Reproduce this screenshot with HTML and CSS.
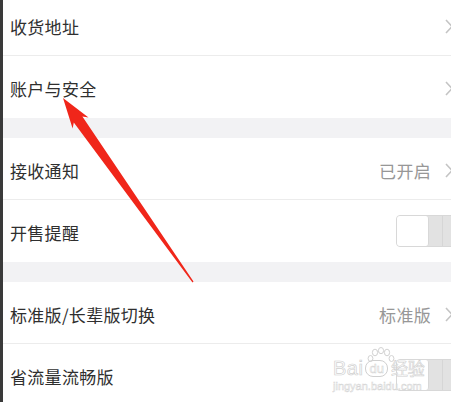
FILE: index.html
```html
<!DOCTYPE html>
<html lang="zh-CN">
<head>
<meta charset="utf-8">
<title>设置</title>
<link rel="stylesheet" href="styles.css">
</head>
<body>
<div class="screen">
  <div class="list">
    <div class="row first sep">
      <span class="label">收货地址</span>
      <span class="chev"><svg width="8" height="15" viewBox="0 0 8 15"><path d="M1 1 L7 7.5 L1 14" fill="none" stroke="#c4c4c4" stroke-width="1.6"/></svg></span>
    </div>
    <div class="row">
      <span class="label">账户与安全</span>
      <span class="chev"><svg width="8" height="15" viewBox="0 0 8 15"><path d="M1 1 L7 7.5 L1 14" fill="none" stroke="#c4c4c4" stroke-width="1.6"/></svg></span>
    </div>
    <div class="gap"></div>
    <div class="row sep">
      <span class="label">接收通知</span>
      <span class="value">已开启</span>
      <span class="chev"><svg width="8" height="15" viewBox="0 0 8 15"><path d="M1 1 L7 7.5 L1 14" fill="none" stroke="#c4c4c4" stroke-width="1.6"/></svg></span>
    </div>
    <div class="row">
      <span class="label">开售提醒</span>
      <span class="toggle"><span class="knob"></span><span class="track-line"></span></span>
    </div>
    <div class="gap"></div>
    <div class="row sep">
      <span class="label">标准版/长辈版切换</span>
      <span class="value">标准版</span>
      <span class="chev"><svg width="8" height="15" viewBox="0 0 8 15"><path d="M1 1 L7 7.5 L1 14" fill="none" stroke="#c4c4c4" stroke-width="1.6"/></svg></span>
    </div>
    <div class="row">
      <span class="label">省流量流畅版</span>
      <span class="toggle"><span class="knob"></span><span class="track-line"></span></span>
    </div>
  </div>

  <div class="watermark">
    <svg class="paw" width="30" height="16" viewBox="0 0 30 16">
      <g fill="none" stroke="#d2d2d2" stroke-width="1">
        <ellipse cx="9" cy="5.5" rx="2.6" ry="3.3"/>
        <ellipse cx="15" cy="3.6" rx="2.6" ry="3.1"/>
        <ellipse cx="21" cy="5.5" rx="2.6" ry="3.3"/>
        <ellipse cx="4.5" cy="11.5" rx="2.4" ry="3"/>
        <ellipse cx="25.5" cy="11.5" rx="2.4" ry="3"/>
      </g>
    </svg>
    <div class="wm-top"><span class="wm-bai">Bai</span><span class="wm-du">du</span><span class="wm-jy">经验</span></div>
    <div class="wm-url">jingyan.baidu.com</div>
  </div>

  <svg class="arrow" width="451" height="402" viewBox="0 0 451 402">
    <polygon fill="#f0261a" points="63,98 88.5,117.5 82.4,116.6 193.5,281.6 192.5,282.4 73.8,122.6 72.6,128.5"/>
  </svg>
</div>
</body>
</html>
```

FILE: styles.css
```css
html, body {
  margin: 0;
  padding: 0;
  background: #ffffff;
}

body {
  width: 451px;
  height: 402px;
  overflow: hidden;
  font-family: "Noto Sans CJK SC", "Noto Sans", sans-serif;
}

.screen {
  position: relative;
  width: 451px;
  height: 402px;
  overflow: hidden;
  box-sizing: border-box;
  border-left: 3px solid #3a3a3a;
  background: #ffffff;
}

.list {
  display: flex;
  flex-direction: column;
}

.row {
  position: relative;
  display: flex;
  align-items: center;
  height: 62px;
  padding: 3px 0 0 7px;
  box-sizing: border-box;
  background: #ffffff;
  flex-shrink: 0;
}

.row.first {
  margin-top: -6px;
}

.row.sep {
  border-bottom: 1px solid #ececec;
}

.label {
  flex: 1;
  font-size: 17px;
  color: #2f2f2f;
  letter-spacing: 0.3px;
  white-space: nowrap;
}

.value {
  font-size: 17px;
  color: #979797;
  letter-spacing: 0.3px;
  margin-right: 14px;
}

.chev {
  display: flex;
  width: 8px;
  margin-right: -2px;
}

.gap {
  height: 20px;
  background: #f2f2f4;
  flex-shrink: 0;
}

.toggle {
  position: relative;
  display: flex;
  width: 64px;
  height: 32px;
  margin-right: -9px;
  margin-top: -3px;
  box-sizing: border-box;
  border: 1px solid #d8d8d8;
  border-radius: 4px;
  background: #e2e2e2;
}

.knob {
  width: 31px;
  height: 30px;
  background: #ffffff;
  border-radius: 3px;
  border-right: 1px solid #d8d8d8;
}

.track-line {
  width: 1px;
  margin-left: 13px;
  background: #d6d6d6;
}

.watermark {
  position: absolute;
  left: 330px;
  top: 347px;
  width: 100px;
  color: rgba(255, 255, 255, 0.55);
  pointer-events: none;
}

.paw {
  display: block;
  margin-left: 33px;
}

.wm-top {
  display: flex;
  align-items: center;
  height: 18px;
  margin-top: -4px;
}

.wm-bai {
  font-family: "Liberation Sans", sans-serif;
  font-size: 20px;
  line-height: 18px;
  -webkit-text-stroke: 0.7px #d0d0d0;
  letter-spacing: 0.5px;
}

.wm-du {
  font-family: "Liberation Sans", sans-serif;
  font-size: 13px;
  margin-left: 2px;
  padding: 1px 3px;
  border: 1px solid #d0d0d0;
  border-radius: 8px;
  line-height: 13px;
  -webkit-text-stroke: 0.5px #d0d0d0;
}

.wm-jy {
  font-size: 17px;
  line-height: 18px;
  margin-left: 3px;
  -webkit-text-stroke: 0.6px #d0d0d0;
}

.wm-url {
  font-family: "Liberation Sans", sans-serif;
  font-size: 11px;
  line-height: 12px;
  margin-top: 3px;
  -webkit-text-stroke: 0.5px #d4d4d4;
}

.arrow {
  position: absolute;
  left: -3px;
  top: 0;
  pointer-events: none;
}
```
